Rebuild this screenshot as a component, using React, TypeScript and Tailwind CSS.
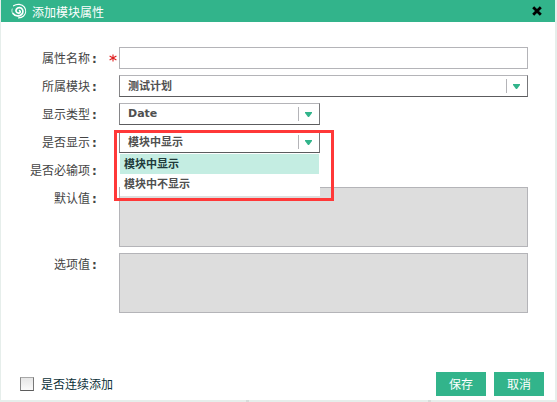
import type { ReactNode } from "react";
import clsx from "clsx";

const options = [
  { label: "模块中显示", selected: true },
  { label: "模块中不显示", selected: false },
];

function SwirlIcon() {
  return (
    <svg
      viewBox="0 0 16 16"
      className="size-4"
      fill="none"
      stroke="white"
      strokeLinecap="round"
    >
      <path
        d="M8.6 7.600C10 8.600 9 10.400 7.400 10.200 5.200 9.900 4.400 7.800 5.400 6.200 6.800 4 10 4.200 11.400 6.400c1.300 2.300.2 5-2.200 6-2.600 1-5.600.2-7.200-1.900"
        strokeWidth="1.7"
      />
      <path
        d="M2.600 2.800C6 .5 11 .9 13.400 4.200c1.900 2.900 1.500 6.600-.8 8.800-1.400 1.300-3.200 1.900-5 1.900"
        strokeWidth="1.2"
      />
      <path d="M1.200 9.400C.8 8.200.8 7.200 1.200 6" strokeWidth="0.8" />
    </svg>
  );
}

function CloseIcon() {
  return (
    <svg viewBox="0 0 10 10" className="size-2.5" stroke="black">
      <path d="M1.2 1.2 8.8 8.8M8.8 1.2 1.2 8.8" strokeWidth="2.8" />
    </svg>
  );
}

function RequiredMark() {
  return (
    <svg
      viewBox="0 0 8 8"
      className="size-2"
      stroke="#e02020"
      strokeWidth="1.1"
      aria-label="必填"
    >
      <path d="M4 .4V7.600M.6 2 7.400 6M7.400 2 .6 6" />
    </svg>
  );
}

type FieldProps = {
  label: string;
  required?: boolean;
  tall?: boolean;
  children?: ReactNode;
};

function Field({ label, required, tall, children }: FieldProps) {
  return (
    <div className={clsx("flex", tall ? "h-[60px]" : "h-[22px]")}>
      <label className="flex h-[22px] w-[101px] shrink-0 justify-end leading-6 whitespace-nowrap text-[#444]">
        {label}
        <span className="w-3 pl-0.5 font-bold">:</span>
      </label>
      <span className="flex h-[22px] w-[17px] shrink-0 items-center justify-end pr-0.5">
        {required && <RequiredMark />}
      </span>
      {children}
    </div>
  );
}

type SelectProps = { value: string; wide?: boolean; children?: ReactNode };

function Select({ value, wide, children }: SelectProps) {
  return (
    <div
      className={clsx(
        "relative flex h-[22px] items-center border border-t-[#b4b4b8] border-r-[#77777a] border-b-[#5c5c5e] border-l-[#858588] bg-white pl-2",
        wide ? "w-[409px]" : "w-[201px]"
      )}
    >
      <span
        className={clsx(
          "flex-1 text-[11px] leading-5 font-bold text-[#505050]",
          value !== "Date" && "pt-px"
        )}
      >
        {value}
      </span>
      <span className="flex h-3.5 w-[21px] items-center border-l border-[#b4b4b8] pl-1.5">
        <svg viewBox="0 0 7 5" className="h-[5px] w-[7px]">
          <path d="M0 0H7V1L4 5H3L0 1Z" fill="#32b48b" />
        </svg>
      </span>
      {children}
    </div>
  );
}

export default function App() {
  return (
    <div className="h-[402px] w-[557px] overflow-hidden bg-[#e6eeeb] pr-0.5 pl-px font-['DejaVu_Sans','Noto_Sans_CJK_SC',sans-serif] text-xs">
      <div className="flex h-[400px] flex-col bg-white">
        <header className="flex h-[22px] shrink-0 items-center bg-[#32b48b] pr-[13px] pl-2.5 text-white">
          <SwirlIcon />
          <h1 className="flex-1 pt-[3px] pl-[5px] leading-5">添加模块属性</h1>
          <button aria-label="关闭">
            <CloseIcon />
          </button>
        </header>

        <form className="flex flex-1 flex-col gap-1.5 pt-[25px]">
          <Field label="属性名称" required>
            <input className="w-[409px] border border-[#b4b4b8] bg-white" />
          </Field>
          <Field label="所属模块">
            <Select value="测试计划" wide />
          </Field>
          <Field label="显示类型">
            <Select value="Date" />
          </Field>
          <Field label="是否显示">
            <Select value="模块中显示">
              {/* Open option list */}
              <ul className="absolute top-[21px] left-0 z-10 h-[43px] w-[200px] bg-white pt-px text-[11px] font-bold">
                {options.map((option) => (
                  <li
                    key={option.label}
                    className={clsx(
                      "mr-px h-5 pl-1 leading-[22px]",
                      option.selected
                        ? "bg-[#c4ede2] text-[#213b3b]"
                        : "text-[#505050]"
                    )}
                  >
                    {option.label}
                  </li>
                ))}
              </ul>
              <div className="absolute -top-0.5 -left-1.5 z-20 h-[71px] w-[220px] border-3 border-[#ff3838]" />
            </Select>
          </Field>
          <Field label="是否必输项" />
          <Field label="默认值" tall>
            <textarea className="w-[409px] resize-none border border-[#b4b4b8] bg-[#ddd]" />
          </Field>
          <Field label="选项值" tall>
            <textarea className="w-[409px] resize-none border border-[#b4b4b8] bg-[#ddd]" />
          </Field>
        </form>

        <footer className="flex h-7 shrink-0 items-start gap-2 pr-[11px] pl-[19px]">
          <label className="flex h-6 flex-1 items-center text-[#0b3038]">
            <input
              type="checkbox"
              className="mr-[7px] size-3.5 appearance-none border border-t-[#a8a8a8] border-r-[#777] border-b-[#5c5c5c] border-l-[#888] bg-linear-to-b from-[#e6e6e6] to-[#fafafa]"
            />
            <span className="pt-0.5">是否连续添加</span>
          </label>
          <button className="h-6 w-[50px] bg-[#32b48b] pt-0.5 text-white">
            保存
          </button>
          <button className="h-6 w-[50px] bg-[#32b48b] pt-0.5 text-white">
            取消
          </button>
        </footer>
      </div>
      {/* Column edges of the page behind the dialog */}
      <div className="flex h-0.5 gap-[179px] pl-[245px]">
        <span className="w-[3px] bg-[#d5dcda]" />
        <span className="w-[3px] bg-[#d5dcda]" />
      </div>
    </div>
  );
}
